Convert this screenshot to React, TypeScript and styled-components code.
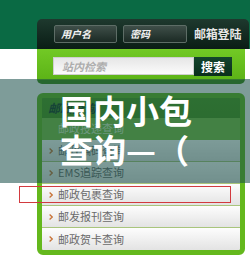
import React from "react";
import styled, { createGlobalStyle } from "styled-components";

const GlobalStyle = createGlobalStyle`
  html, body {
    margin: 0;
    padding: 0;
    background: #ffffff;
  }
  body {
    font-family: "Noto Sans CJK SC", "Noto Sans", sans-serif;
  }
  * { box-sizing: border-box; }
`;

const Page = styled.div`
  position: relative;
  width: 250px;
  height: 262px;
  overflow: hidden;
  background: #ffffff;
`;

const TopBand = styled.header`
  height: 49px;
  background: #0a6a44;
  padding: 19px 1px 0 37px;
`;

const LoginBar = styled.div`
  height: 30px;
  display: flex;
  align-items: center;
  gap: 6px;
  padding: 6px 0 6px 17px;
  border-radius: 5px 5px 0 0;
  background: linear-gradient(#1e392e, #0a1d15);
`;

const Field = styled.span<{ $w: number }>`
  width: ${(p) => p.$w}px;
  height: 18px;
  display: flex;
  align-items: center;
  padding-left: 6px;
  border: 1px solid #5d6d66;
  border-radius: 2px;
  background: linear-gradient(#3f4f49, #1b2a24);
  color: #f4f4f4;
  font-size: 10px;
  font-weight: 700;
  font-style: italic;
  line-height: 1;
`;

const LoginLabel = styled.span`
  margin-left: 1px;
  color: #e6e6e6;
  font-size: 12px;
  font-weight: 700;
  line-height: 1;
  letter-spacing: -0.2px;
`;

const SearchBar = styled.div`
  margin-left: 37px;
  width: 208px;
  height: 35px;
  display: flex;
  align-items: flex-start;
  padding: 8px 0 0 16px;
  background: linear-gradient(#72c925, #5cb317);
  border-bottom: 4px solid #3f8a12;
  border-radius: 0 0 5px 5px;
`;

const SearchInput = styled.span`
  width: 141px;
  height: 18px;
  display: flex;
  align-items: center;
  padding-left: 8px;
  border: 1px solid #cfcfcf;
  background: linear-gradient(#e6e6e6, #fbfbfb);
  color: #adadad;
  font-size: 11px;
  font-weight: 700;
  font-style: italic;
  line-height: 1;
`;

const SearchButton = styled.span`
  width: 38px;
  height: 19px;
  display: flex;
  align-items: center;
  justify-content: center;
  background: linear-gradient(#14452d, #0a2f1c);
  color: #ffffff;
  font-size: 12px;
  font-weight: 700;
  line-height: 1;
`;

const MenuBox = styled.nav`
  margin: 9px 0 0 37px;
  width: 208px;
  height: 162px;
  border: 5px solid #64b81d;
  border-radius: 6px;
  display: flex;
  flex-direction: column;
  background: #64b81d;
  overflow: hidden;
`;

const MenuHead = styled.div`
  height: 20px;
  display: flex;
  align-items: center;
  padding-left: 11px;
  margin: -5px -5px 0;
  height: 25px;
  padding-top: 5px;
  background: linear-gradient(#4f9e1c, #4a9619);
  color: #173828;
  font-size: 12px;
  font-weight: 700;
  font-style: italic;
  line-height: 1;
`;

const MenuRow = styled.div<{ $active?: boolean }>`
  height: 22px;
  flex: none;
  display: flex;
  align-items: center;
  gap: 5px;
  padding-left: 7px;
  font-size: 11px;
  line-height: 1;
  color: ${(p) => (p.$active ? "rgba(235,255,225,0.85)" : "#6a6a6a")};
  background: ${(p) =>
    p.$active ? "#7cc444" : "linear-gradient(#fdfdfd, #e3e3e3)"};
  border-bottom: 1px solid ${(p) => (p.$active ? "#7cc444" : "#a9c57c")};
  &:last-child {
    border-bottom: none;
  }
`;

const ArrowSlot = styled.span<{ $hidden?: boolean }>`
  width: 4px;
  display: flex;
  visibility: ${(p) => (p.$hidden ? "hidden" : "visible")};
`;

const Arrow = ({ hidden }: { hidden?: boolean }) => (
  <ArrowSlot $hidden={hidden}>
    <svg width="4" height="6" viewBox="0 0 4 6">
      <path d="M0.6 0.6 L3.2 3 L0.6 5.4" fill="none" stroke="#c9743a" strokeWidth="1.3" />
    </svg>
  </ArrowSlot>
);

const Overlay = styled.div`
  position: absolute;
  left: 0;
  top: 79px;
  width: 250px;
  height: 104px;
  background: rgba(20, 75, 70, 0.55);
  padding: 12px 0 0 60px;
`;

const Title = styled.h1`
  margin: 0;
  width: 140px;
  color: #ffffff;
  font-family: "Noto Sans CJK SC", sans-serif;
  font-size: 33px;
  font-weight: 700;
  line-height: 39px;
  letter-spacing: 0;
`;

const Highlight = styled.div`
  position: absolute;
  left: 19px;
  top: 186px;
  width: 212px;
  height: 17px;
  border: 1px solid #d23a3f;
`;

const items = [
  "邮政编码查询",
  "EMS追踪查询",
  "邮政包裹查询",
  "邮发报刊查询",
  "邮政贺卡查询",
];

export default function App() {
  return (
    <Page>
      <GlobalStyle />
      <TopBand>
        <LoginBar>
          <Field $w={63}>用户名</Field>
          <Field $w={64}>密码</Field>
          <LoginLabel>邮箱登陆</LoginLabel>
        </LoginBar>
      </TopBand>
      <SearchBar>
        <SearchInput>站内检索</SearchInput>
        <SearchButton>搜索</SearchButton>
      </SearchBar>
      <MenuBox>
        <MenuHead>邮政查询</MenuHead>
        <MenuRow $active>
          <Arrow hidden />
          邮政投递查询
        </MenuRow>
        {items.map((t) => (
          <MenuRow key={t}>
            <Arrow />
            {t}
          </MenuRow>
        ))}
      </MenuBox>
      <Overlay>
        <Title>国内小包查询—（</Title>
      </Overlay>
      <Highlight />
    </Page>
  );
}
